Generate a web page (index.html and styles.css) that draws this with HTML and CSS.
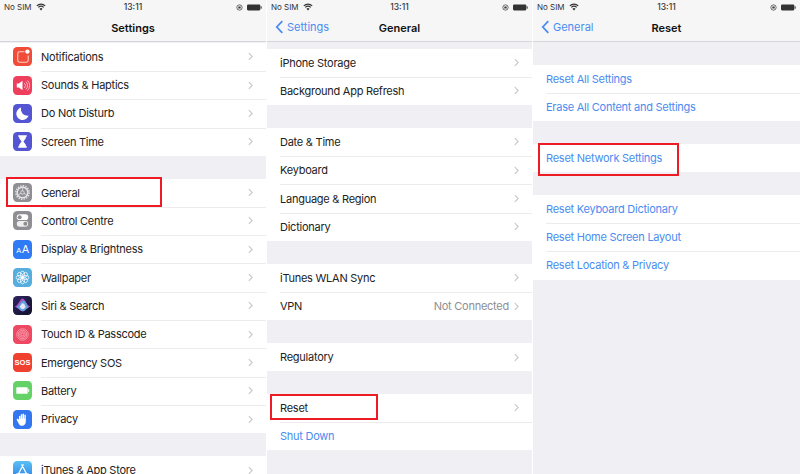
FILE: index.html
```html
<!DOCTYPE html>
<html lang="en">
<head>
    <meta charset="UTF-8">
    <meta name="viewport" content="width=device-width, initial-scale=1.0">
    <title>Reset Network Settings</title>
    <link rel="stylesheet" href="styles.css">
</head>
<body>

    <svg class="defs" width="0" height="0" aria-hidden="true">
        <symbol id="wifi" viewBox="0 0 16 12">
            <path d="M8 11.5 L5.6 8.8 A3.6 3.6 0 0 1 10.4 8.8 Z" fill="currentColor"/>
            <path d="M3.7 6.7 A6.2 6.2 0 0 1 12.3 6.7 M1.3 4.1 A9.6 9.6 0 0 1 14.7 4.1" fill="none" stroke="currentColor" stroke-width="1.9"/>
        </symbol>
        <symbol id="lock" viewBox="0 0 12 12">
            <circle cx="6" cy="6" r="4.6" fill="none" stroke="currentColor" stroke-width="1.2"/>
            <rect x="4" y="4.2" width="4" height="3.6" rx="0.6" fill="currentColor"/>
        </symbol>
        <symbol id="battery" viewBox="0 0 18 8">
            <rect x="0" y="0.5" width="16" height="7" rx="1.4" fill="currentColor"/>
            <rect x="16.4" y="2.6" width="1.2" height="2.8" rx="0.5" fill="currentColor"/>
        </symbol>
        <symbol id="chevron" viewBox="0 0 6 10">
            <path d="M1 1 L5 5 L1 9" fill="none" stroke="currentColor" stroke-width="1.3"/>
        </symbol>
        <symbol id="back" viewBox="0 0 9 15">
            <path d="M7.5 1.2 L1.6 7.5 L7.5 13.8" fill="none" stroke="currentColor" stroke-width="1.9"/>
        </symbol>
    </svg>

    <div class="page">

        <!-- Settings -->
        <section class="panel">
            <div class="status">
                <span class="carrier">No SIM</span>
                <svg class="ic-wifi"><use href="#wifi"/></svg>
                <span class="clock">13:11</span>
                <svg class="ic-lock"><use href="#lock"/></svg>
                <svg class="ic-battery"><use href="#battery"/></svg>
            </div>
            <div class="nav"><span class="nav-title">Settings</span></div>

            <ul class="group group-apps">
                <li class="row">
                    <svg class="app" viewBox="0 0 20 20"><rect width="20" height="20" rx="4.4" fill="#f04c38"/><path d="M12 5H7a2 2 0 0 0-2 2v7a2 2 0 0 0 2 2h7a2 2 0 0 0 2-2V9" fill="none" stroke="#fff" stroke-opacity=".75" stroke-width="1.1"/><circle cx="15.2" cy="4.8" r="2.3" fill="#fff"/></svg>
                    <span class="label">Notifications</span>
                    <svg class="chev"><use href="#chevron"/></svg>
                </li>
                <li class="row">
                    <svg class="app" viewBox="0 0 20 20"><rect width="20" height="20" rx="4.4" fill="#ee3f5c"/><path d="M4 8h2.2L10 5v10L6.2 12H4z" fill="#fff"/><path d="M12 7.5a3.5 3.5 0 0 1 0 5M13.6 6a5.6 5.6 0 0 1 0 8M15.2 4.6a7.6 7.6 0 0 1 0 10.8" fill="none" stroke="#fff" stroke-opacity=".8" stroke-width=".8"/></svg>
                    <span class="label">Sounds &amp; Haptics</span>
                    <svg class="chev"><use href="#chevron"/></svg>
                </li>
                <li class="row">
                    <svg class="app" viewBox="0 0 20 20"><rect width="20" height="20" rx="4.4" fill="#5355d3"/><path d="M8.6 3.8a6.6 6.6 0 1 0 7.8 8.4A6.8 6.8 0 0 1 8.6 3.8z" fill="#fff"/></svg>
                    <span class="label">Do Not Disturb</span>
                    <svg class="chev"><use href="#chevron"/></svg>
                </li>
                <li class="row">
                    <svg class="app" viewBox="0 0 20 20"><rect width="20" height="20" rx="4.4" fill="#5355d3"/><path d="M5.5 3.5h9v1.4h-1v1.6L11 10l2.5 3.5v1.6h1v1.4h-9v-1.4h1v-1.6L9 10 6.500 6.500V4.900h-1z" fill="#fff"/></svg>
                    <span class="label">Screen Time</span>
                    <svg class="chev"><use href="#chevron"/></svg>
                </li>
            </ul>

            <ul class="group">
                <li class="row">
                    <svg class="app" viewBox="0 0 20 20"><rect width="20" height="20" rx="4.4" fill="#8e8e93"/><circle cx="10" cy="10" r="5.600" fill="none" stroke="#e6e6e8" stroke-width="1.500"/><circle cx="10" cy="10" r="7" fill="none" stroke="#e6e6e8" stroke-width="1.600" stroke-dasharray="1.500 1.250"/><circle cx="10" cy="10" r="1.800" fill="none" stroke="#e6e6e8" stroke-width=".9"/><path d="M10 5v3.200M5.700 12.500l2.700-1.600M14.300 12.500l-2.700-1.600" stroke="#e6e6e8" stroke-width=".8"/></svg>
                    <span class="label">General</span>
                    <svg class="chev"><use href="#chevron"/></svg>
                </li>
                <li class="row">
                    <svg class="app" viewBox="0 0 20 20"><rect width="20" height="20" rx="4.4" fill="#8e8e93"/><rect x="4" y="3.500" width="12" height="6" rx="3" fill="#fff"/><circle cx="7" cy="6.500" r="2.100" fill="#8e8e93"/><rect x="4" y="10.500" width="12" height="6" rx="3" fill="#fff" fill-opacity=".85"/><circle cx="13" cy="13.500" r="2.100" fill="#8e8e93"/></svg>
                    <span class="label">Control Centre</span>
                    <svg class="chev"><use href="#chevron"/></svg>
                </li>
                <li class="row">
                    <svg class="app" viewBox="0 0 20 20"><rect width="20" height="20" rx="4.4" fill="#2f7af5"/><text class="app-aa" x="10" y="14"><tspan font-size="8">A</tspan><tspan font-size="11" dx="1">A</tspan></text></svg>
                    <span class="label">Display &amp; Brightness</span>
                    <svg class="chev"><use href="#chevron"/></svg>
                </li>
                <li class="row">
                    <svg class="app" viewBox="0 0 20 20"><rect width="20" height="20" rx="4.4" fill="#55aede"/><g fill="none" stroke="#fff" stroke-opacity=".85" stroke-width=".9"><ellipse cx="10" cy="6.500" rx="2.200" ry="3.200"/><ellipse cx="10" cy="13.500" rx="2.200" ry="3.200"/><ellipse cx="6.500" cy="10" rx="3.200" ry="2.200"/><ellipse cx="13.500" cy="10" rx="3.200" ry="2.200"/><ellipse cx="7.500" cy="7.500" rx="2.200" ry="3.200" transform="rotate(-45 7.500 7.500)"/><ellipse cx="12.500" cy="7.500" rx="2.200" ry="3.200" transform="rotate(45 12.500 7.500)"/><ellipse cx="7.500" cy="12.500" rx="2.200" ry="3.200" transform="rotate(45 7.500 12.500)"/><ellipse cx="12.500" cy="12.500" rx="2.200" ry="3.200" transform="rotate(-45 12.500 12.500)"/></g></svg>
                    <span class="label">Wallpaper</span>
                    <svg class="chev"><use href="#chevron"/></svg>
                </li>
                <li class="row">
                    <svg class="app" viewBox="0 0 20 20"><defs><linearGradient id="siri" x1="0" y1="0" x2="1" y2="1"><stop offset="0" stop-color="#2f2560"/><stop offset="1" stop-color="#10102a"/></linearGradient></defs><rect width="20" height="20" rx="4.4" fill="url(#siri)"/><path d="M1.500 11C6 10 7 2.500 10 2.500S14 10 18.500 11C14 12 13 16 10 16S6 12 1.500 11z" fill="#c257d8" fill-opacity=".85"/><path d="M3.500 12C7 10 8 5 11 5s3.500 5 5.500 7c-2.500 1-3.500 4-6 4s-4-3-7-4z" fill="#4fb4e8" fill-opacity=".8"/><path d="M7 11.500C8.300 9.500 9 7.500 10.500 7.500s2 2.500 2.800 4c-1 .8-1.800 2.500-3 2.500S8.200 12.300 7 11.500z" fill="#e8e8f4"/></svg>
                    <span class="label">Siri &amp; Search</span>
                    <svg class="chev"><use href="#chevron"/></svg>
                </li>
                <li class="row">
                    <svg class="app" viewBox="0 0 20 20"><rect width="20" height="20" rx="4.4" fill="#ee4862"/><g fill="none" stroke="#fff" stroke-opacity=".55" stroke-width=".8"><circle cx="10" cy="10" r="1.500"/><circle cx="10" cy="10" r="3"/><circle cx="10" cy="10" r="4.500"/><circle cx="10" cy="10" r="6"/></g></svg>
                    <span class="label">Touch ID &amp; Passcode</span>
                    <svg class="chev"><use href="#chevron"/></svg>
                </li>
                <li class="row">
                    <svg class="app" viewBox="0 0 20 20"><rect width="20" height="20" rx="4.4" fill="#f0402f"/><text class="app-sos" x="10" y="13">SOS</text></svg>
                    <span class="label">Emergency SOS</span>
                    <svg class="chev"><use href="#chevron"/></svg>
                </li>
                <li class="row">
                    <svg class="app" viewBox="0 0 20 20"><rect width="20" height="20" rx="4.4" fill="#65d268"/><rect x="3.500" y="6.500" width="12" height="7" rx="1" fill="#fff"/><rect x="16" y="8.500" width="1" height="3" fill="#fff"/></svg>
                    <span class="label">Battery</span>
                    <svg class="chev"><use href="#chevron"/></svg>
                </li>
                <li class="row">
                    <svg class="app" viewBox="0 0 20 20"><rect width="20" height="20" rx="4.4" fill="#3276f0"/><path d="M6.300 10V6.500a.8.800 0 0 1 1.500 0V9h.4V4.800a.8.800 0 0 1 1.500 0V9h.4V4.300a.8.800 0 0 1 1.500 0V9h.4V5.300a.8.800 0 0 1 1.500 0v6.900c0 2.700-1.600 4.500-4 4.500-2 0-3-1.200-3.800-3L4 10.500c-.4-1 .9-1.700 1.500-.8z" fill="#fff"/></svg>
                    <span class="label">Privacy</span>
                    <svg class="chev"><use href="#chevron"/></svg>
                </li>
            </ul>

            <ul class="group">
                <li class="row">
                    <svg class="app" viewBox="0 0 20 20"><defs><linearGradient id="store" x1="0" y1="0" x2="0" y2="1"><stop offset="0" stop-color="#5cc0f2"/><stop offset="1" stop-color="#2a7fe8"/></linearGradient></defs><rect width="20" height="20" rx="4.4" fill="url(#store)"/><path d="M10.800 4 5.500 14M9.200 4l5.300 10M4 13.500h12" fill="none" stroke="#fff" stroke-width="1.300" stroke-linecap="round"/></svg>
                    <span class="label">iTunes &amp; App Store</span>
                    <svg class="chev"><use href="#chevron"/></svg>
                </li>
            </ul>

            <div class="mark mark-general"></div>
        </section>

        <!-- General -->
        <section class="panel">
            <div class="status">
                <span class="carrier">No SIM</span>
                <svg class="ic-wifi"><use href="#wifi"/></svg>
                <span class="clock">13:11</span>
                <svg class="ic-lock"><use href="#lock"/></svg>
                <svg class="ic-battery"><use href="#battery"/></svg>
            </div>
            <div class="nav">
                <span class="nav-back"><svg class="ic-back"><use href="#back"/></svg>Settings</span>
                <span class="nav-title">General</span>
            </div>

            <ul class="group group-first">
                <li class="row plain"><span class="label">iPhone Storage</span><svg class="chev"><use href="#chevron"/></svg></li>
                <li class="row plain"><span class="label">Background App Refresh</span><svg class="chev"><use href="#chevron"/></svg></li>
            </ul>
            <ul class="group">
                <li class="row plain"><span class="label">Date &amp; Time</span><svg class="chev"><use href="#chevron"/></svg></li>
                <li class="row plain"><span class="label">Keyboard</span><svg class="chev"><use href="#chevron"/></svg></li>
                <li class="row plain"><span class="label">Language &amp; Region</span><svg class="chev"><use href="#chevron"/></svg></li>
                <li class="row plain"><span class="label">Dictionary</span><svg class="chev"><use href="#chevron"/></svg></li>
            </ul>
            <ul class="group">
                <li class="row plain"><span class="label">iTunes WLAN Sync</span><svg class="chev"><use href="#chevron"/></svg></li>
                <li class="row plain"><span class="label">VPN</span><span class="value">Not Connected</span><svg class="chev"><use href="#chevron"/></svg></li>
            </ul>
            <ul class="group">
                <li class="row plain"><span class="label">Regulatory</span><svg class="chev"><use href="#chevron"/></svg></li>
            </ul>
            <ul class="group">
                <li class="row plain"><span class="label">Reset</span><svg class="chev"><use href="#chevron"/></svg></li>
                <li class="row plain"><span class="label link">Shut Down</span></li>
            </ul>

            <div class="mark mark-reset"></div>
        </section>

        <!-- Reset -->
        <section class="panel">
            <div class="status">
                <span class="carrier">No SIM</span>
                <svg class="ic-wifi"><use href="#wifi"/></svg>
                <span class="clock">13:11</span>
                <svg class="ic-lock"><use href="#lock"/></svg>
                <svg class="ic-battery"><use href="#battery"/></svg>
            </div>
            <div class="nav">
                <span class="nav-back"><svg class="ic-back"><use href="#back"/></svg>General</span>
                <span class="nav-title">Reset</span>
            </div>

            <ul class="group group-top">
                <li class="row plain"><span class="label link">Reset All Settings</span></li>
                <li class="row plain"><span class="label link">Erase All Content and Settings</span></li>
            </ul>
            <ul class="group">
                <li class="row plain"><span class="label link">Reset Network Settings</span></li>
            </ul>
            <ul class="group">
                <li class="row plain"><span class="label link">Reset Keyboard Dictionary</span></li>
                <li class="row plain"><span class="label link">Reset Home Screen Layout</span></li>
                <li class="row plain"><span class="label link">Reset Location &amp; Privacy</span></li>
            </ul>

            <div class="mark mark-network"></div>
        </section>

    </div>

</body>
</html>
```

FILE: styles.css
```css
* {
    box-sizing: border-box;
}

body {
    font-family: Inter, "Liberation Sans", sans-serif;
    background-color: #fff;
    margin: 0;
    padding: 0;
    color: #222;
}

.defs {
    position: absolute;
}

.page {
    display: grid;
    grid-template-columns: 266px 265px 267px;
    gap: 1px;
    height: 474px;
    overflow: hidden;
}

.panel {
    position: relative;
    background-color: #efeff4;
    height: 474px;
    overflow: hidden;
}

/* Status bar */
.status {
    display: flex;
    align-items: center;
    height: 14px;
    padding: 0 4px;
    background-color: #f6f6f7;
    font-size: 8px;
    color: #333;
}

.ic-wifi {
    width: 10px;
    height: 8px;
    margin-left: 4px;
}

.clock {
    position: absolute;
    left: 0;
    right: 0;
    top: 2px;
    text-align: center;
    font-size: 8.5px;
    font-weight: 500;
}

.ic-lock {
    width: 7px;
    height: 7px;
    margin-left: auto;
}

.ic-battery {
    width: 15px;
    height: 7px;
    margin-left: 4px;
}

/* Nav bar */
.nav {
    position: relative;
    height: 28px;
    background-color: #f6f6f7;
    border-bottom: 1px solid #d6d6da;
    display: flex;
    align-items: center;
    justify-content: center;
    font-size: 11px;
}

.nav-title {
    font-weight: 600;
    color: #111;
}

.nav-back {
    position: absolute;
    left: 8px;
    top: 6px;
    display: flex;
    align-items: center;
    gap: 3px;
    color: #4a8cf0;
}

.ic-back {
    width: 9px;
    height: 14px;
}

/* List groups */
.group {
    list-style: none;
    margin: 22.6px 0 0;
    padding: 0;
    background-color: #fff;
}

.panel > .nav + .group-apps {
    margin-top: 0.6px;
}

.panel > .nav + .group-first {
    margin-top: 6.5px;
}

.panel > .nav + .group-top {
    margin-top: 22.5px;
}

.row {
    display: flex;
    align-items: center;
    height: 28.33px;
    padding: 0 13px;
    font-size: 11px;
    letter-spacing: -0.25px;
    position: relative;
}

.row + .row::before {
    content: "";
    position: absolute;
    left: 41px;
    right: 0;
    top: 0;
    height: 1px;
    background-color: #ececef;
}

.row.plain + .row.plain::before {
    left: 13px;
}

.app {
    width: 19px;
    height: 19px;
    flex-shrink: 0;
    margin-right: 9px;
}

.app-aa {
    fill: #fff;
    font-family: "Liberation Sans", sans-serif;
    text-anchor: middle;
}

.app-sos {
    fill: #fff;
    font-family: "Liberation Sans", sans-serif;
    font-size: 8px;
    font-weight: 700;
    letter-spacing: 0;
    text-anchor: middle;
}

.label {
    flex: 1;
    white-space: nowrap;
}

.link {
    color: #4a8cf0;
}

.value {
    color: #8e8e93;
    margin-right: 5px;
}

.chev {
    width: 5px;
    height: 9px;
    color: #c7c7cc;
    flex-shrink: 0;
}

/* Red highlight boxes */
.mark {
    position: absolute;
    border: 2px solid #ed1c24;
}

.mark-general {
    left: 6px;
    top: 177px;
    width: 156px;
    height: 30px;
}

.mark-reset {
    left: 3px;
    top: 394px;
    width: 108px;
    height: 26px;
}

.mark-network {
    left: 5px;
    top: 143px;
    width: 141px;
    height: 33px;
}
```
